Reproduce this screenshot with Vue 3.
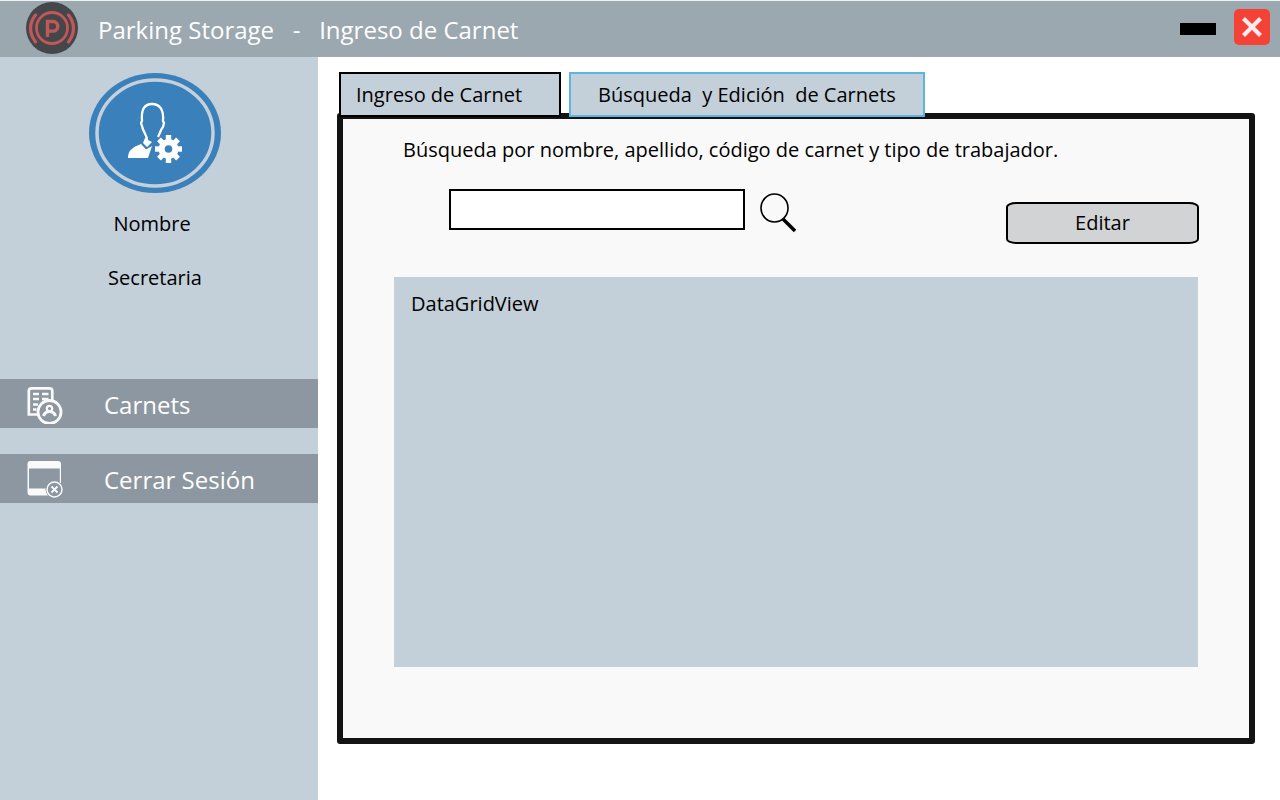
<script setup>
import { ref } from 'vue'

const query = ref('')
</script>

<template>
  <div class="app">
    <header class="topbar">
      <svg class="logo" viewBox="0 0 52 52" aria-hidden="true">
        <circle cx="26" cy="26" r="26" fill="#43474a" />
        <g fill="none" stroke="#c2575a">
          <circle cx="26" cy="26" r="15.500" stroke-width="2.800" />
          <path d="M9.500 13Q-.5 26 9.500 40M42.500 13Q52.500 26 42.500 40" stroke-width="3.200" stroke-linecap="round" />
          <path d="M21.500 35V19.500h5.500a4.800 4.800 0 0 1 0 9.600h-5.500" stroke-width="3.400" />
        </g>
      </svg>
      <h1 class="title">Parking Storage&nbsp;&nbsp; -&nbsp;&nbsp; Ingreso de Carnet</h1>
      <button class="minimize" type="button" aria-label="Minimizar"></button>
      <button class="close" type="button" aria-label="Cerrar">
        <svg viewBox="0 0 36 36" aria-hidden="true">
          <path d="M9.500 9.500l17 17M26.500 9.500L9.500 26.500" stroke="#ffebee" stroke-width="4.200" />
        </svg>
      </button>
    </header>

    <div class="body">
      <aside class="sidebar">
        <svg class="avatar" viewBox="0 0 132 120" aria-hidden="true">
          <ellipse cx="66" cy="60" rx="66" ry="60" fill="#3a81bb" />
          <ellipse cx="66" cy="60" rx="58" ry="53" fill="none" stroke="#c5d0da" stroke-width="3.500" />
          <path d="M58 67c0-5-4-8-5-14l-1-3 1-2c-1-11 2-17 10-17s12 6 11 17l1 2-1 4c-2 2-3 6-5 10" fill="none" stroke="#fff" stroke-width="2.300" stroke-linejoin="round" />
          <path d="M56 65l3 2 4 2-5 5-4-4z" fill="#fff" />
          <path d="M39 85c0-8 5-11 13-14l5 5.500 6-3.500-4 12z" fill="#fff" />
          <g transform="translate(79.500 76)">
            <g fill="#fff">
              <circle r="10" />
              <rect x="-2.700" y="-14" width="5.400" height="28" />
              <rect x="-13.500" y="-2.700" width="27" height="5.400" />
              <rect x="-2.700" y="-13.500" width="5.400" height="27" transform="rotate(45)" />
              <rect x="-2.700" y="-13.500" width="5.400" height="27" transform="rotate(-45)" />
            </g>
            <circle r="3.800" fill="#3a81bb" />
          </g>
        </svg>
        <p class="name">Nombre</p>
        <p class="role">Secretaria</p>

        <nav class="menu" aria-label="Principal">
          <a class="item" href="#carnets">
            <svg class="menu-icon" viewBox="0 0 36 38" fill="none" stroke="#fafafa" aria-hidden="true">
              <path d="M11 28.500H1.800V5Q1.800 2.300 4.500 2.300H22.500Q25.300 2.300 25.300 5V14" stroke-width="2.700" />
              <path d="M6 8h6M15 8h6.500M6 13h6M15 13h6.500M6 18.500h5M6 23.500h3.500" stroke-width="2.400" />
              <circle cx="22.500" cy="26" r="11.500" fill="#8d97a1" stroke-width="2.800" />
              <circle cx="22.500" cy="22.500" r="2.700" stroke-width="2.200" />
              <path d="M16.500 30q1.500-4.500 6-4.500t6 4.500" stroke-width="3" />
            </svg>
            <span>Carnets</span>
          </a>
          <a class="item" href="#salir">
            <svg class="menu-icon" viewBox="0 0 36 38" aria-hidden="true">
              <path fill="#fafafa" fill-rule="evenodd" d="M3.500 0H31Q34 0 34 3V31.500Q34 34.500 31 34.500H3.500Q.5 34.500 .5 31.500V3Q.5 0 3.500 0ZM2 7.500V27.500H32.800V7.500Z" />
              <circle cx="27.500" cy="28.500" r="9" fill="#8d97a1" />
              <circle cx="27.500" cy="28.500" r="7.500" fill="none" stroke="#fafafa" stroke-width="1.500" />
              <path d="M24.500 25.500l6 6M30.500 25.500l-6 6" stroke="#fafafa" stroke-width="1.800" />
            </svg>
            <span>Cerrar Sesión</span>
          </a>
        </nav>
      </aside>

      <main class="content">
        <div class="tabs" role="tablist">
          <button class="tab first" type="button" role="tab" aria-selected="false">Ingreso de Carnet</button>
          <button class="tab current" type="button" role="tab" aria-selected="true">Búsqueda&nbsp; y Edición&nbsp; de Carnets</button>
        </div>
        <section class="panel">
          <label class="hint" for="query">Búsqueda por nombre, apellido, código de carnet y tipo de trabajador.</label>
          <div class="tools">
            <input id="query" v-model="query" class="query" type="text" />
            <button class="search" type="button" aria-label="Buscar">
              <svg viewBox="0 0 36 40" aria-hidden="true">
                <ellipse cx="14.500" cy="15" rx="13.500" ry="14" fill="none" stroke="#000" stroke-width="1.600" />
                <path d="M23 26L35 38" stroke="#000" stroke-width="3.400" />
              </svg>
            </button>
            <button class="edit" type="button">Editar</button>
          </div>
          <div class="grid">DataGridView</div>
        </section>
      </main>
    </div>
  </div>
</template>

<style>
body {
  margin: 0;
}
</style>

<style scoped>
.app {
  display: flex;
  flex-direction: column;
  min-height: 100vh;
  background: #fff;
  color: #000;
  font-family: "Open Sans", sans-serif;
  font-size: 20px;
  line-height: 28px;
}

button,
input {
  box-sizing: border-box;
  font: inherit;
  color: inherit;
}

button {
  padding: 0;
  border: 0;
  background: none;
  cursor: pointer;
}

svg {
  display: block;
}

.topbar {
  box-sizing: border-box;
  display: flex;
  align-items: center;
  height: 57px;
  padding: 0 10px 2px 26px;
  border-top: 1px solid #eef1f2;
  background: #9ba8af;
}

.logo {
  width: 52px;
  height: 52px;
}

.title {
  flex: 1;
  margin: 0 0 0 20px;
  padding-top: 4px;
  color: #fff;
  font-size: 24px;
  font-weight: 400;
  line-height: 32px;
  white-space: nowrap;
}

.minimize {
  width: 36px;
  height: 12px;
  margin: 2px 18px 0 0;
  background: #000;
}

.close {
  width: 36px;
  height: 36px;
  margin-bottom: 2px;
  border-radius: 5px;
  background: #f44336;
}

.body {
  flex: 1;
  display: flex;
}

.sidebar {
  box-sizing: border-box;
  flex: none;
  display: flex;
  flex-direction: column;
  width: 318px;
  padding-top: 16px;
  background: #c3cfd9;
}

.avatar {
  width: 132px;
  height: 120px;
  margin-left: 89px;
}

.name,
.role {
  margin: 17px 0 0;
  padding-right: 14px;
  text-align: center;
}

.role {
  margin-top: 26px;
  padding-right: 8px;
}

.menu {
  display: flex;
  flex-direction: column;
  gap: 26px;
  margin-top: 87px;
}

.item {
  box-sizing: border-box;
  display: flex;
  align-items: center;
  gap: 41px;
  height: 49px;
  padding: 2px 0 0 27px;
  background: #8d97a1;
  color: #fff;
  font-size: 24px;
  text-decoration: none;
}

.menu-icon {
  width: 36px;
  height: 38px;
}

.content {
  flex: 1;
  display: flex;
  flex-direction: column;
  padding: 15px 25px 56px 19px;
}

.tabs {
  position: relative;
  z-index: 1;
  display: flex;
  gap: 8px;
  padding-left: 2px;
}

.tab {
  height: 45px;
  padding-top: 1px;
  border: 2px solid #000;
  background: #c3cfd9;
  text-align: left;
}

.first {
  width: 222px;
  padding-left: 15px;
}

.current {
  width: 356px;
  border-color: #5bb5e0;
  text-align: center;
}

.panel {
  flex: 1;
  display: flex;
  flex-direction: column;
  margin-top: -4px;
  padding: 17px 51px 71px;
  border: 6px solid #131313;
  border-radius: 3px;
  background: #f9f9f9;
}

.hint {
  margin-left: 9px;
}

.tools {
  display: flex;
  align-items: flex-start;
  margin: 25px 0 33px;
  padding-left: 55px;
}

.query {
  width: 296px;
  height: 41px;
  padding: 0 8px;
  border: 2px solid #000;
  background: #fff;
}

.search {
  width: 36px;
  height: 40px;
  margin: 4px 0 0 15px;
}

.edit {
  width: 193px;
  height: 42px;
  margin: 13px -1px 0 auto;
  border: 2px solid #000;
  border-radius: 10px / 5px;
  background: #d1d3d4;
}

.grid {
  box-sizing: border-box;
  flex: 1;
  padding: 13px 17px;
  background: #c3cfd9;
}
</style>
